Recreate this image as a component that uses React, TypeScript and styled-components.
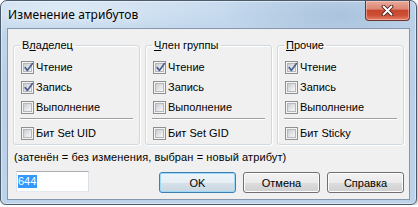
import React from "react";
import styled, { createGlobalStyle } from "styled-components";

const GlobalStyle = createGlobalStyle`
  html, body {
    margin: 0;
    padding: 0;
    background: #ffffff;
  }
  body {
    font-family: "Liberation Sans", Arial, sans-serif;
    font-size: 11px;
    color: #000;
  }
`;

const Window = styled.div`
  box-sizing: border-box;
  width: 417px;
  height: 205px;
  display: flex;
  flex-direction: column;
  padding: 0 6px 4px;
  border: 1px solid #4b5b6c;
  border-radius: 7px 7px 6px 6px;
  background:
    radial-gradient(ellipse 120px 40px at 340px 14px, rgba(150, 178, 208, 0.55), rgba(150, 178, 208, 0) 100%),
    radial-gradient(ellipse 180px 30px at 60px 6px, rgba(226, 237, 248, 0.8), rgba(226, 237, 248, 0) 100%),
    linear-gradient(to bottom, #c6daee 0%, #b9d0e8 40%, #bdd3ea 100%);
  box-shadow: inset 0 0 0 1px rgba(255, 255, 255, 0.45), 1px 1px 3px rgba(0, 0, 0, 0.3);
`;

const TitleBar = styled.div`
  height: 27px;
  display: flex;
  align-items: flex-start;
`;

const Title = styled.span`
  padding-left: 1px;
  font-family: "Noto Sans", "Liberation Sans", sans-serif;
  font-size: 12px;
  line-height: 27px;
  letter-spacing: 0.1px;
  color: #000;
  text-shadow: 0 0 6px rgba(255, 255, 255, 0.9);
`;

const CloseButton = styled.div`
  box-sizing: border-box;
  margin-left: auto;
  width: 45px;
  height: 20px;
  display: flex;
  align-items: center;
  justify-content: center;
  border: 1px solid #6e3429;
  border-top: none;
  border-radius: 0 0 4px 4px;
  background: linear-gradient(
    to bottom,
    #e9ab9d 0%,
    #db8672 42%,
    #c7462f 50%,
    #cc5035 75%,
    #e6806a 100%
  );
  box-shadow: inset 0 0 0 1px rgba(255, 220, 210, 0.45);
`;

const Client = styled.div`
  flex: 1;
  display: flex;
  flex-direction: column;
  padding: 10px 5px 0;
  background: #f0f0f0;
  border: 1px solid #8497ac;
`;

const Groups = styled.div`
  display: grid;
  grid-template-columns: repeat(3, 127px);
  column-gap: 5px;
`;

const GroupBox = styled.fieldset`
  margin: 0;
  padding: 6px 6px 1px;
  min-width: 0;
  border: 1px solid #d0d9df;
  border-radius: 3px;
  box-shadow: inset 1px 1px 0 #ffffff, 1px 1px 0 #ffffff;
`;

const Legend = styled.legend`
  padding: 0 2px;
  font-size: 11px;
  line-height: 12px;
`;

const CheckRow = styled.label`
  height: 20px;
  display: flex;
  align-items: center;
  gap: 2px;
  padding-left: 1px;
  white-space: nowrap;
`;

const Box = styled.span`
  box-sizing: border-box;
  position: relative;
  width: 13px;
  height: 13px;
  flex: none;
  padding: 1px;
  border: 1px solid #8e8f8f;
  background: #f4f4f4;
`;

const BoxInner = styled.span`
  display: block;
  box-sizing: border-box;
  width: 9px;
  height: 9px;
  border: 1px solid #b4b8bd;
  background: linear-gradient(135deg, #c9ccd1 0%, #e4e5e7 55%, #f8f8f8 100%);
`;

const Tick = styled.svg`
  position: absolute;
  left: 0;
  top: -1px;
`;

const Separator = styled.div`
  height: 1px;
  margin: 1px 0 3px;
  background: #a0a0a0;
  border-bottom: 1px solid #ffffff;
`;

const Hint = styled.div`
  margin-top: 6px;
  padding-left: 1px;
  line-height: 13px;
  letter-spacing: 0.1px;
  white-space: nowrap;
`;

const BottomRow = styled.div`
  margin-top: 7px;
  display: flex;
  align-items: flex-start;
`;

const TextField = styled.div`
  box-sizing: border-box;
  width: 73px;
  height: 21px;
  margin-left: 3px;
  padding: 0 1px;
  display: flex;
  align-items: center;
  background: #ffffff;
  border: 1px solid;
  border-color: #abadb3 #dbdfe6 #e3e9ef #e2e3ea;
`;

const Selected = styled.span`
  background: #3399ff;
  color: #ffffff;
  line-height: 13px;
  padding-right: 1px;
`;

const Buttons = styled.div`
  margin-left: auto;
  display: flex;
  gap: 7px;
`;

const Button = styled.button<{ $default?: boolean }>`
  box-sizing: border-box;
  width: 77px;
  height: 21px;
  margin-top: 1px;
  padding: 0;
  font-family: "Liberation Sans", Arial, sans-serif;
  font-size: 11px;
  font-weight: 400;
  color: #000;
  border: 1px solid ${(p) => (p.$default ? "#3c7fb1" : "#707070")};
  border-radius: 3px;
  background: ${(p) =>
    p.$default
      ? "linear-gradient(#eef5fa 0%, #e6eef4 50%, #d6e1ea 51%, #c9d6e0 100%)"
      : "linear-gradient(#f2f2f2 0%, #ebebeb 50%, #dddddd 51%, #cfcfcf 100%)"};
  box-shadow: inset 0 0 0 1px ${(p) => (p.$default ? "#9edaf7" : "#fcfcfc")};
`;

type Perm = { label: string; checked: boolean };

type Group = {
  mnemonic: [string, string, string];
  perms: Perm[];
  special: string;
};

const groups: Group[] = [
  {
    mnemonic: ["В", "л", "аделец"],
    perms: [
      { label: "Чтение", checked: true },
      { label: "Запись", checked: true },
      { label: "Выполнение", checked: false },
    ],
    special: "Бит Set UID",
  },
  {
    mnemonic: ["", "Ч", "лен группы"],
    perms: [
      { label: "Чтение", checked: true },
      { label: "Запись", checked: false },
      { label: "Выполнение", checked: false },
    ],
    special: "Бит Set GID",
  },
  {
    mnemonic: ["", "П", "рочие"],
    perms: [
      { label: "Чтение", checked: true },
      { label: "Запись", checked: false },
      { label: "Выполнение", checked: false },
    ],
    special: "Бит Sticky",
  },
];

function CheckBox({ label, checked }: Perm) {
  return (
    <CheckRow>
      <Box>
        <BoxInner />
        {checked && (
          <Tick width="13" height="13" viewBox="0 0 13 13">
            <path
              d="M3.2 6.6 L5.4 9.4 L10.4 2.6"
              fill="none"
              stroke="#4a5f8f"
              strokeWidth="1.7"
              strokeLinecap="round"
              strokeLinejoin="round"
            />
          </Tick>
        )}
      </Box>
      <span>{label}</span>
    </CheckRow>
  );
}

export default function App() {
  return (
    <>
      <GlobalStyle />
      <Window>
        <TitleBar>
          <Title>Изменение атрибутов</Title>
          <CloseButton>
            <svg width="13" height="11" viewBox="0 0 13 11">
              <path d="M2.5 1.5 L10.5 9.5 M10.5 1.5 L2.5 9.5" stroke="#4a1c16" strokeWidth="3.8" strokeLinecap="round" />
              <path d="M2.5 1.5 L10.5 9.5 M10.5 1.5 L2.5 9.5" stroke="#ffffff" strokeWidth="2" strokeLinecap="round" />
            </svg>
          </CloseButton>
        </TitleBar>
        <Client>
          <Groups>
            {groups.map((g) => (
              <GroupBox key={g.special}>
                <Legend>
                  {g.mnemonic[0]}
                  <u>{g.mnemonic[1]}</u>
                  {g.mnemonic[2]}
                </Legend>
                {g.perms.map((p) => (
                  <CheckBox key={p.label} label={p.label} checked={p.checked} />
                ))}
                <Separator />
                <CheckBox label={g.special} checked={false} />
              </GroupBox>
            ))}
          </Groups>
          <Hint>(затенён = без изменения, выбран = новый атрибут)</Hint>
          <BottomRow>
            <TextField>
              <Selected>644</Selected>
            </TextField>
            <Buttons>
              <Button $default>OK</Button>
              <Button>Отмена</Button>
              <Button>Справка</Button>
            </Buttons>
          </BottomRow>
        </Client>
      </Window>
    </>
  );
}
